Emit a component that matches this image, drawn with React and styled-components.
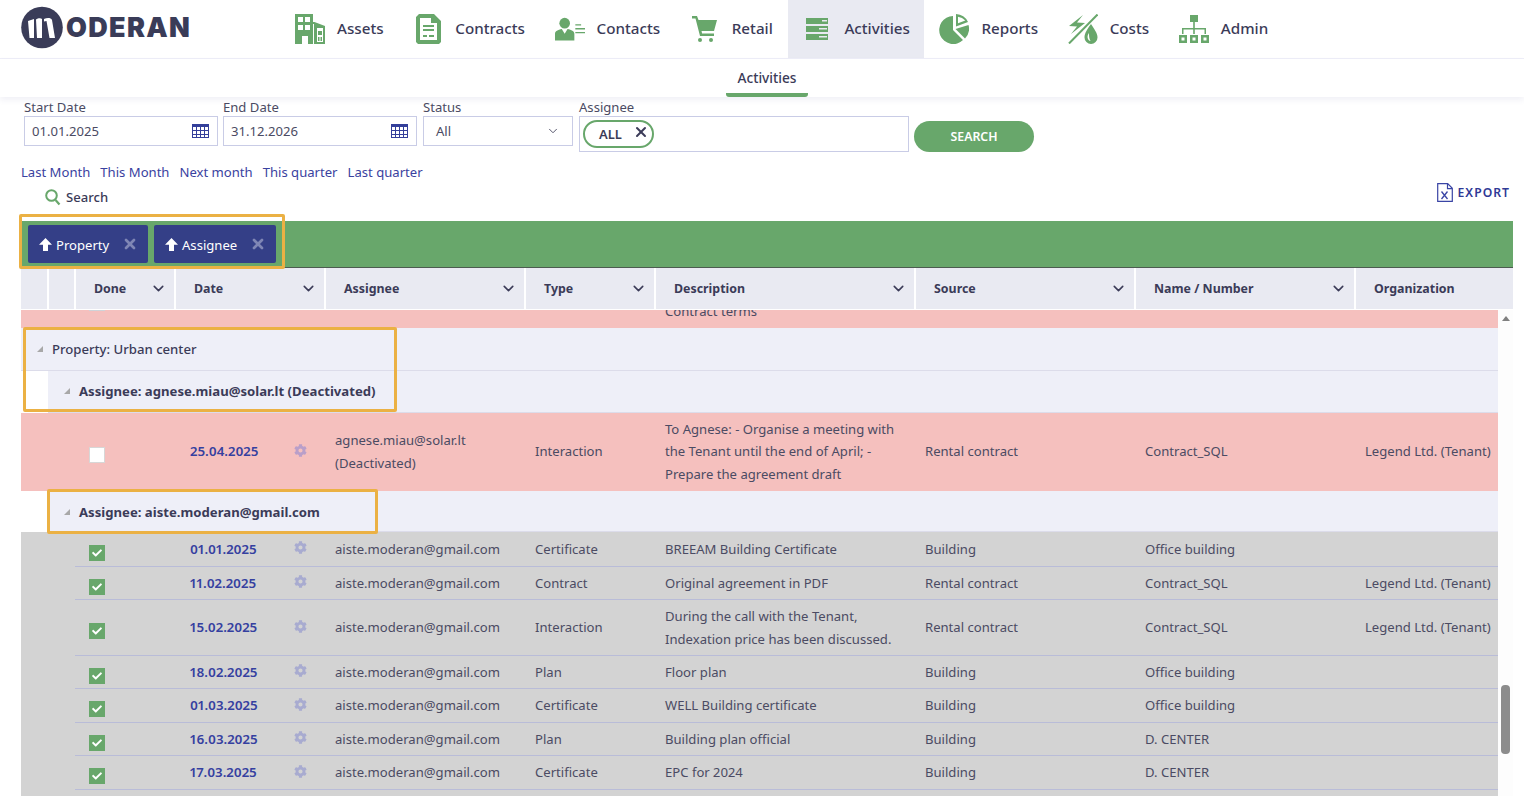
import React from 'react';
import styled, { createGlobalStyle } from 'styled-components';
import { FaCog, FaCheck } from 'react-icons/fa';
import { ChevronDown, X } from 'lucide-react';

const GREEN = '#68a76b';
const NAVY = '#343f87';
const INK = '#3b3b58';
const BODY = '#4b4b63';
const LINK = '#3a42a0';

const Global = createGlobalStyle`
  html, body { margin: 0; padding: 0; background: #fff; height: 100%; overflow: hidden; }
  body { font-family: "Noto Sans", "Open Sans", sans-serif; color: ${BODY}; font-size: 13.1px; font-variant-numeric: proportional-nums; }
  * { box-sizing: border-box; }
`;

const Page = styled.div`
  height: 796px;
  display: flex;
  flex-direction: column;
  overflow: hidden;
`;

const Header = styled.header`
  height: 59px;
  flex: none;
  display: flex;
  border-bottom: 1px solid #eeeef8;
  padding-left: 21px;
`;
const Logo = styled.div`
  display: flex;
  align-items: center;
  width: 260px;
  flex: none;
  height: 55px;
`;
const LogoWord = styled.span`
  font-family: Inter, "Liberation Sans", sans-serif;
  font-weight: 900;
  font-size: 27px;
  letter-spacing: 1.3px;
  color: #3a3c58;
  margin-left: 3px;
  line-height: 1;
`;
const Nav = styled.nav`
  display: flex;
  gap: 1.6px;
`;
const NavItem = styled.a`
  display: flex;
  align-items: center;
  height: 58px;
  padding: 0 14px;
  gap: 12px;
  background: ${p => (p.$active ? '#e9eaf2' : 'transparent')};
  color: ${INK};
  font-size: 15.2px;
  font-weight: 500;
`;
const NavLabel = styled.span`
  padding-bottom: 3px;
`;
const NavIconBox = styled.span`
  width: 30px;
  height: 30px;
  display: flex;
  justify-content: center;
  align-items: center;
  flex: none;
`;

const SubNav = styled.div`
  height: 38px;
  flex: none;
  display: flex;
  justify-content: center;
  padding-right: 4px;
  box-shadow: 0 3px 6px rgba(60, 60, 140, 0.08);
  position: relative;
`;
const SubTab = styled.a`
  width: 82px;
  margin-left: 14px;
  height: 38px;
  display: flex;
  align-items: center;
  justify-content: center;
  padding-top: 3px;
  font-size: 13.7px;
  font-weight: 500;
  color: ${INK};
  border-bottom: 4px solid ${GREEN};
  border-radius: 0 0 3px 3px;
`;

const Filters = styled.div`
  display: flex;
  align-items: flex-start;
  padding: 2px 0 0 24px;
  height: 65px;
  flex: none;
`;
const Field = styled.div`
  width: ${p => p.$w}px;
  margin-right: ${p => p.$mr}px;
  flex: none;
`;
const Label = styled.div`
  font-size: 13.1px;
  line-height: 17px;
  color: ${BODY};
`;
const InputBox = styled.div`
  height: ${p => p.$h || 30}px;
  border: 1px solid #c9cce6;
  display: flex;
  align-items: center;
  justify-content: space-between;
  padding: ${p => p.$pad || '0 8px 0 7px'};
  font-size: 13.1px;
  font-variant-numeric: normal;
  color: ${BODY};
`;
const ChipOuter = styled.span`
  width: 71px;
  height: 28px;
  border: 2px solid ${GREEN};
  border-radius: 14px;
  display: flex;
  align-items: center;
  justify-content: space-between;
  padding: 0 3px 0 14px;
  font-size: 13px;
  font-weight: 600;
  color: ${INK};
`;
const ChipX = styled.span`
  display: flex;
  margin-top: -4px;
`;
const SearchButton = styled.button`
  width: 120px;
  height: 31px;
  margin-top: 22px;
  border: none;
  border-radius: 16px;
  background: ${GREEN};
  color: #fff;
  font-family: inherit;
  font-weight: 600;
  font-size: 12.3px;
`;

const QuickLinks = styled.div`
  display: flex;
  gap: 10px;
  padding-left: 21px;
  height: 20px;
  flex: none;
  line-height: 20px;
  font-size: 13.1px;
  color: ${LINK};
`;
const ToolRow = styled.div`
  display: flex;
  justify-content: space-between;
  height: 39px;
  flex: none;
  padding: 0 14px 0 45px;
`;
const SearchLabel = styled.div`
  display: flex;
  align-items: center;
  gap: 5px;
  height: 20px;
  margin-top: 5px;
  font-size: 13.1px;
  font-weight: 500;
  color: ${INK};
`;
const ExportLink = styled.div`
  display: flex;
  align-items: center;
  gap: 5px;
  height: 20px;
  font-size: 12.2px;
  font-weight: 600;
  letter-spacing: 1px;
  color: #2f3a96;
`;

const Table = styled.div`
  margin: 0 11px 0 21px;
  flex: 1;
  display: flex;
  flex-direction: column;
  min-height: 0;
  position: relative;
`;
const GroupBar = styled.div`
  height: 47px;
  flex: none;
  background: ${GREEN};
  border-bottom: 1px solid #4c5c50;
  display: flex;
  gap: 6px;
  padding: 4px 7px;
  position: relative;
`;
const GroupChip = styled.div`
  width: ${p => p.$w}px;
  height: 38px;
  background: ${NAVY};
  border-radius: 2px;
  color: #fff;
  display: flex;
  align-items: center;
  padding-left: 11px;
  font-size: 13.1px;
  position: relative;
`;
const ChipName = styled.span`
  margin-left: 4px;
  padding-top: 1px;
`;
const ChipClose = styled.span`
  position: absolute;
  right: 10px;
  top: 11px;
  color: #7f86b5;
  display: flex;
`;
const Highlight = styled.div`
  position: absolute;
  left: ${p => p.$l}px;
  top: ${p => p.$t}px;
  width: ${p => p.$w}px;
  height: ${p => p.$h}px;
  border: 3.5px solid #ebb144;
  border-radius: 2px;
  pointer-events: none;
  z-index: 3;
`;

const HeadRow = styled.div`
  height: 42px;
  flex: none;
  display: grid;
  grid-template-columns: 26px 25px 98px 148px 198px 128px 258px 218px 218px 1fr;
  column-gap: 2px;
  border-bottom: 1px solid #fff;
`;
const HeadCell = styled.div`
  background: #e9eaf2;
  display: flex;
  align-items: center;
  justify-content: space-between;
  padding: ${p => (p.$empty ? '0' : '0 7px 0 18px')};
  font-size: 12.4px;
  font-weight: 700;
  color: ${INK};
`;

const Scroller = styled.div`
  flex: 1;
  min-height: 0;
  display: flex;
`;
const Rows = styled.div`
  flex: 1;
  min-width: 0;
  overflow: hidden;
`;
const ScrollTrack = styled.div`
  width: 15px;
  flex: none;
  background: #fdfdfd;
  display: flex;
  flex-direction: column;
  align-items: center;
  padding-top: 6px;
`;
const ScrollUp = styled.div`
  width: 0;
  height: 0;
  border-left: 4px solid transparent;
  border-right: 4px solid transparent;
  border-bottom: 5px solid #808080;
`;
const ScrollThumb = styled.div`
  width: 9px;
  height: 69px;
  margin-top: 364px;
  border-radius: 4px;
  background: #8c8c8c;
`;

const CutRow = styled.div`
  height: 18px;
  background: #f5c0be;
  overflow: hidden;
  display: grid;
  grid-template-columns: 644px 1fr;
  position: relative;
`;
const CutText = styled.div`
  grid-column: 2;
  margin-top: -10px;
  line-height: 22px;
  font-size: 13.1px;
  color: ${BODY};
`;
const CutCheck = styled.div`
  position: absolute;
  left: 68px;
  top: 0;
  width: 16px;
  height: 1px;
  background: #cfd3d8;
`;

const GroupRow = styled.div`
  height: ${p => p.$h}px;
  margin-left: ${p => p.$indent || 0}px;
  background: #eeeff8;
  border-bottom: 1px solid #dcdcea;
  display: flex;
  align-items: center;
  position: relative;
  padding: ${p => p.$top || 0}px 0 ${p => p.$bottom || 0}px ${p => p.$pad}px;
  font-size: 13.15px;
  font-weight: ${p => (p.$bold ? 700 : 500)};
  color: ${INK};
`;
const Tri = styled.span`
  width: 0;
  height: 0;
  margin-right: 9px;
  border-left: 6px solid transparent;
  border-bottom: 6px solid #a8a8a8;
`;

const DataRow = styled.div`
  height: ${p => p.$h}px;
  background: ${p => p.$bg};
  display: grid;
  grid-template-columns: 54px 100px 150px 200px 130px 260px 220px 220px 1fr;
  position: relative;
  font-size: 13.1px;
  color: ${BODY};
  align-items: center;
`;
const RowLine = styled.div`
  position: absolute;
  left: 54px;
  right: 0;
  bottom: 0;
  height: 1px;
  background: #b9bcd8;
`;
const Cell = styled.div`
  padding: 0 0 ${p => (p.$tall ? 1 : 2)}px 10px;
  line-height: ${p => (p.$tall ? '22.5px' : '20px')};
  white-space: ${p => (p.$tall ? 'normal' : 'nowrap')};
`;
const CheckCell = styled.div`
  padding: 6px 0 0 14px;
  display: flex;
`;
const CheckBox = styled.span`
  width: 16px;
  height: 16px;
  display: flex;
  align-items: center;
  justify-content: center;
  background: ${p => (p.$on ? GREEN : '#fff')};
  border: ${p => (p.$on ? 'none' : '1px solid #d7d7d7')};
  color: #fff;
`;
const DateCell = styled.div`
  display: flex;
  justify-content: space-between;
  align-items: center;
  padding: 0 18px 2px 15px;
  font-size: 13.3px;
  font-weight: 600;
  color: #3540a0;
`;
const Gear = styled.span`
  display: flex;
  margin-top: -2px;
  color: ${p => p.$color};
`;

const g = GREEN;
const IconAssets = () => (
  <svg width="30" height="30" viewBox="0 0 30 30">
    <path fill={g} fillRule="evenodd" d="M0 0h18v8h1.500l10.500 4v18H19V10h-1v20h-5v-8H7v8H0zM3 3v5h5V3zm7 0v5h5V3zM3 11v5h5v-5zm7 0v5h5v-5zM22 14v14h6V14zm1 3h4v4h-4zm0 6h1.500v4H23zm2.500 0H27v4h-1.500z" />
  </svg>
);
const IconContracts = () => (
  <svg width="25" height="30" viewBox="0 0 25 30">
    <path fill={g} fillRule="evenodd" d="M3 0h15l7 7v21l-2 2H2l-2-2V3zM4 4v22h17V9h-6V4zM7 11h11v2H7zm0 4h11v2H7zm0 6h4v2H7zm6 0h5v2h-5z" />
  </svg>
);
const IconContacts = () => (
  <svg width="31" height="24" viewBox="0 0 31 24">
    <circle cx="10" cy="6" r="5.500" fill={g} />
    <path fill={g} d="M0 24v-7c0-3 3-4 7-5l3 5 3-5c4 1 7 2 7 5v7z" />
    <path fill={g} d="M21 7h6v1.500h-6zM21 11h10v1.500H21zM21 15h10v1.500H21z" />
  </svg>
);
const IconRetail = () => (
  <svg width="25" height="26" viewBox="0 0 25 26">
    <path fill={g} d="M0 0h5l1.500 4H25l-3 11H9.500l.6 2.500H22V20H8L3.500 2.500H0z" />
    <circle cx="8" cy="24" r="2" fill={g} />
    <circle cx="19" cy="24" r="2" fill={g} />
  </svg>
);
const IconActivities = () => (
  <svg width="22" height="22" viewBox="0 0 22 22">
    <path fill={g} fillRule="evenodd" d="M0 0h22v6H0zM16 2v1.500h5V2zM0 8h22v6H0zM13 10v1.500h8V10zM0 16h22v6H0zM13 18v1.500h8V18z" />
  </svg>
);
const IconReports = () => (
  <svg width="30" height="30" viewBox="0 0 30 30">
    <path fill={g} d="M14 2v14l10 10A14 14 0 1 1 14 2z" />
    <path fill={g} d="M16.500 15l13-4a14 14 0 0 1-3.500 13.500z" />
    <path fill={g} fillRule="evenodd" d="M17 0a14 14 0 0 1 12 8l-12 4.500zM19 2.800v6.500l7.300-2.700A11.500 11.500 0 0 0 19 2.800z" />
  </svg>
);
const IconCosts = () => (
  <svg width="30" height="30" viewBox="0 0 30 30">
    <path fill={g} d="M15 1L1 12l8 .5L3 20l14-11-8-.5z" />
    <path d="M29.500.500L1 29.500" stroke={g} strokeWidth="2" />
    <path fill={g} fillRule="evenodd" d="M23 10c3 5 6.500 9 6.500 13.500a6.500 6.500 0 0 1-13 0c0-4.500 3-8.500 6.500-13.500zM21 19c-1.500 2-1.800 4.500-1 6 .5 1 1.500 2 2.500 2-1.500-3-1.500-5-1.500-8z" />
  </svg>
);
const IconAdmin = () => (
  <svg width="30" height="28" viewBox="0 0 30 28">
    <path fill={g} d="M11 0h8v7h-8z" />
    <path fill={g} d="M14.200 7h1.600v6H27v6h-1.500v-4.500h-9.700V19h-1.600v-4.500H4.500V19H3v-6h11.200z" />
    <path fill={g} fillRule="evenodd" d="M0 20h8v8H0zM2.500 22.500v3h3v-3zM11 20h8v8h-8zM13.500 22.500v3h3v-3zM22 20h8v8h-8zM24.500 22.500v3h3v-3z" />
  </svg>
);
const LogoMark = () => (
  <svg width="42" height="43" viewBox="0 0 42 43">
    <circle cx="21" cy="21.500" r="20.800" fill="#3a3c58" />
    <path fill="#fff" d="M7 15l6-2v19H8.500zM15 13.500c2-1.500 5-1.500 6-.5v19h-5zM23 13c3-1.500 7-1.500 8 1l3 18h-5.500l-3-17-2.500 .5z" />
  </svg>
);
const CalendarIcon = () => (
  <svg width="17" height="14" viewBox="0 0 17 14">
    <rect x="0.500" y="0.500" width="16" height="13" fill="none" stroke="#343f9a" />
    <path fill="#343f9a" d="M0 0h17v3H0zM0 6h17v1H0zM0 10h17v1H0zM4 3h1v11H4zM8 3h1v11H8zM12 3h1v11h-1z" />
  </svg>
);
const MagIcon = () => (
  <svg width="16" height="17" viewBox="0 0 16 17">
    <circle cx="6.500" cy="6.500" r="5.300" fill="none" stroke={g} strokeWidth="2" />
    <path d="M10.500 11l4 4.500" stroke={g} strokeWidth="2.200" />
  </svg>
);
const ExcelIcon = () => (
  <svg width="16" height="19" viewBox="0 0 16 19">
    <path d="M.7.700h10l4.600 4.600v13H.7zM10.500.7v5h5" fill="none" stroke="#3a45a5" strokeWidth="1.200" />
    <path d="M4.500 8.500l6 7.500M10.500 8.500l-6 7.500" stroke="#3a45a5" strokeWidth="1.300" />
  </svg>
);
const BoldArrowUp = () => (
  <svg width="13" height="13" viewBox="0 0 13 13">
    <path fill="#fff" d="M6.500 0L13 6.800H9V13H4V6.800H0z" />
  </svg>
);

const nav = [
  ['Assets', IconAssets],
  ['Contracts', IconContracts],
  ['Contacts', IconContacts],
  ['Retail', IconRetail],
  ['Activities', IconActivities, true],
  ['Reports', IconReports],
  ['Costs', IconCosts],
  ['Admin', IconAdmin],
];

const headCols = ['', '', 'Done', 'Date', 'Assignee', 'Type', 'Description', 'Source', 'Name / Number', 'Organization'];

const rent = ['Rental contract', 'Contract_SQL', 'Legend Ltd. (Tenant)'];
const gm = 'aiste.moderan@gmail.com';
const rows = [
  { h: 35, date: '01.01.2025', type: 'Certificate', desc: 'BREEAM Building Certificate', rest: ['Building', 'Office building', ''] },
  { h: 33, date: '11.02.2025', type: 'Contract', desc: 'Original agreement in PDF', rest: rent },
  { h: 56, date: '15.02.2025', type: 'Interaction', desc: 'During the call with the Tenant, Indexation price has been discussed.', rest: rent },
  { h: 33, date: '18.02.2025', type: 'Plan', desc: 'Floor plan', rest: ['Building', 'Office building', ''] },
  { h: 34, date: '01.03.2025', type: 'Certificate', desc: 'WELL Building certificate', rest: ['Building', 'Office building', ''] },
  { h: 33, date: '16.03.2025', type: 'Plan', desc: 'Building plan official', rest: ['Building', 'D. CENTER', ''] },
  { h: 34, date: '17.03.2025', type: 'Certificate', desc: 'EPC for 2024', rest: ['Building', 'D. CENTER', ''] },
  { h: 34, date: '', type: '', desc: '', rest: ['', '', ''], empty: true },
];

const Row = ({ r, bg, gear, user }) => (
  <DataRow $h={r.h} $bg={bg}>
    <span />
    <CheckCell>
      {!r.empty && (
        <CheckBox $on={!r.open}>{!r.open && <FaCheck size={10} />}</CheckBox>
      )}
    </CheckCell>
    <DateCell>
      <span>{r.date}</span>
      {!r.empty && (
        <Gear $color={gear}>
          <FaCog size={13} />
        </Gear>
      )}
    </DateCell>
    <Cell $tall>{user}</Cell>
    <Cell>{r.type}</Cell>
    <Cell $tall>{r.desc}</Cell>
    <Cell>{r.rest[0]}</Cell>
    <Cell>{r.rest[1]}</Cell>
    <Cell>{r.rest[2]}</Cell>
    {!r.noLine && <RowLine />}
  </DataRow>
);

export default function App() {
  return (
    <Page>
      <Global />
      <Header>
        <Logo>
          <LogoMark />
          <LogoWord>ODERAN</LogoWord>
        </Logo>
        <Nav>
          {nav.map(([label, Icon, active]) => (
            <NavItem key={label} $active={active}>
              <NavIconBox>
                <Icon />
              </NavIconBox>
              <NavLabel>{label}</NavLabel>
            </NavItem>
          ))}
        </Nav>
      </Header>
      <SubNav>
        <SubTab>Activities</SubTab>
      </SubNav>

      <Filters>
        <Field $w={194} $mr={5}>
          <Label>Start Date</Label>
          <InputBox>
            01.01.2025
            <CalendarIcon />
          </InputBox>
        </Field>
        <Field $w={194} $mr={6}>
          <Label>End Date</Label>
          <InputBox>
            31.12.2026
            <CalendarIcon />
          </InputBox>
        </Field>
        <Field $w={150} $mr={6}>
          <Label>Status</Label>
          <InputBox $pad="0 12px">
            All
            <ChevronDown size={14} strokeWidth={1.6} />
          </InputBox>
        </Field>
        <Field $w={330} $mr={5}>
          <Label>Assignee</Label>
          <InputBox $h={36} $pad="0 3px">
            <ChipOuter>
              ALL
              <ChipX>
                <X size={16} strokeWidth={3} />
              </ChipX>
            </ChipOuter>
          </InputBox>
        </Field>
        <SearchButton>SEARCH</SearchButton>
      </Filters>

      <QuickLinks>
        <span>Last Month</span>
        <span>This Month</span>
        <span>Next month</span>
        <span>This quarter</span>
        <span>Last quarter</span>
      </QuickLinks>
      <ToolRow>
        <SearchLabel>
          <MagIcon />
          Search
        </SearchLabel>
        <ExportLink>
          <ExcelIcon />
          EXPORT
        </ExportLink>
      </ToolRow>

      <Table>
        <GroupBar>
          <GroupChip $w={120}>
            <BoldArrowUp />
            <ChipName>Property</ChipName>
            <ChipClose>
              <X size={16} strokeWidth={4} />
            </ChipClose>
          </GroupChip>
          <GroupChip $w={122}>
            <BoldArrowUp />
            <ChipName>Assignee</ChipName>
            <ChipClose>
              <X size={16} strokeWidth={4} />
            </ChipClose>
          </GroupChip>
          <Highlight $l={-2} $t={-7} $w={266} $h={55} />
        </GroupBar>
        <HeadRow>
          {headCols.map((c, i) => (
            <HeadCell key={i} $empty={!c}>
              {c}
              {c && c !== 'Organization' && <ChevronDown size={17} strokeWidth={2.2} />}
            </HeadCell>
          ))}
        </HeadRow>
        <Scroller>
          <Rows>
            <CutRow>
              <CutCheck />
              <CutText>Contract terms</CutText>
            </CutRow>
            <GroupRow $h={43} $pad={16}>
              <Tri />
              Property: Urban center
              <Highlight $l={2} $t={-1} $w={374} $h={85} />
            </GroupRow>
            <GroupRow $h={42} $indent={27} $pad={16} $bottom={2} $bold>
              <Tri />
              Assignee: agnese.miau@solar.lt (Deactivated)
            </GroupRow>
            <Row
              r={{
                h: 78,
                date: '25.04.2025',
                type: 'Interaction',
                open: true,
                noLine: true,
                desc: 'To Agnese: - Organise a meeting with the Tenant until the end of April; - Prepare the agreement draft',
                rest: rent,
              }}
              bg="#f5c0be"
              gear="#b99fc9"
              user={
                <>
                  agnese.miau@solar.lt
                  <br />
                  (Deactivated)
                </>
              }
            />
            <GroupRow $h={41} $indent={27} $pad={16} $top={2} $bold>
              <Tri />
              Assignee: aiste.moderan@gmail.com
              <Highlight $l={-1} $t={-2} $w={331} $h={45} />
            </GroupRow>
            {rows.map((r, i) => (
              <Row key={i} r={r} bg="#d3d3d3" gear="#a8abd0" user={r.empty ? '' : gm} />
            ))}
          </Rows>
          <ScrollTrack>
            <ScrollUp />
            <ScrollThumb />
          </ScrollTrack>
        </Scroller>
      </Table>
    </Page>
  );
}
